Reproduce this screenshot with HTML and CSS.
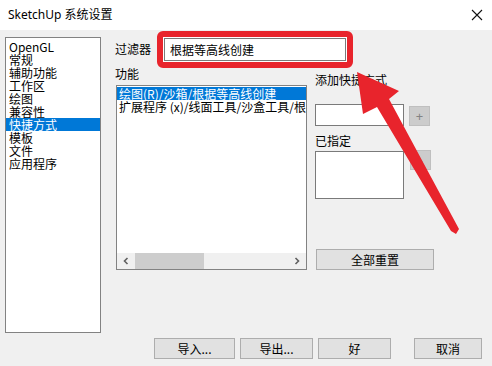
FILE: index.html
```html
<!DOCTYPE html>
<html lang="zh-CN">
<head>
    <meta charset="UTF-8">
    <title>SketchUp 系统设置</title>
    <link rel="stylesheet" href="styles.css">
</head>
<body>
    <div class="dialog">
        <div class="titlebar">
            <span class="title">SketchUp 系统设置</span>
            <svg class="close" width="12" height="12" viewBox="0 0 12 12">
                <path d="M1 1 L11 11 M11 1 L1 11" stroke="#111" stroke-width="1.1" fill="none"/>
            </svg>
        </div>

        <div class="main">
            <ul class="nav">
                <li>OpenGL</li>
                <li>常规</li>
                <li>辅助功能</li>
                <li>工作区</li>
                <li>绘图</li>
                <li>兼容性</li>
                <li class="selected">快捷方式</li>
                <li>模板</li>
                <li>文件</li>
                <li>应用程序</li>
            </ul>

            <div class="panel">
                <div class="filter-row">
                    <span class="label filter-label">过滤器</span>
                    <div class="highlight">
                        <div class="field filter-input">根据等高线创建</div>
                    </div>
                </div>

                <div class="columns">
                    <div class="col-left">
                        <div class="label">功能</div>
                        <div class="func-list">
                            <ul class="rows">
                                <li class="selected">绘图(R)/沙箱/根据等高线创建</li>
                                <li>扩展程序 (x)/线面工具/沙盒工具/根据等高线创建</li>
                            </ul>
                            <div class="hscroll">
                                <span class="arrow">
                                    <svg width="8" height="8" viewBox="0 0 8 8"><path d="M5.5 1 L2.5 4 L5.5 7" stroke="#606060" stroke-width="1.6" fill="none"/></svg>
                                </span>
                                <span class="track"><span class="thumb"></span></span>
                                <span class="arrow">
                                    <svg width="8" height="8" viewBox="0 0 8 8"><path d="M2.5 1 L5.5 4 L2.5 7" stroke="#606060" stroke-width="1.6" fill="none"/></svg>
                                </span>
                            </div>
                        </div>
                    </div>

                    <div class="col-right">
                        <div class="label add-label">添加快捷方式</div>
                        <div class="key-row">
                            <div class="field key-input"></div>
                            <button class="small-btn" disabled>+</button>
                        </div>
                        <div class="label assigned-label">已指定</div>
                        <div class="key-row">
                            <div class="field assigned-box"></div>
                            <button class="small-btn minus" disabled>-</button>
                        </div>
                        <button class="btn reset-btn">全部重置</button>
                    </div>
                </div>
            </div>
        </div>

        <div class="footer">
            <button class="btn import-btn">导入...</button>
            <button class="btn export-btn">导出...</button>
            <button class="btn ok-btn">好</button>
            <button class="btn cancel-btn">取消</button>
        </div>

        <!-- annotation drawn over the dialog -->
        <svg class="arrow-note" width="492" height="366" viewBox="0 0 492 366">
            <polygon points="357,72 399,91 389,99 459,229 456,234 451,231 377,107 363,114" fill="#e8242c"/>
        </svg>
    </div>
</body>
</html>
```

FILE: styles.css
```css
:root {
    --face: #f0f0f0;
    --border: #828282;
    --field-border: #7a7a7a;
    --select: #0078d7;
    --btn-face: #e1e1e1;
    --btn-border: #adadad;
    --note-red: #e8242c;
}
* {
    margin: 0;
    padding: 0;
    box-sizing: border-box;
}
body {
    font-family: "Noto Sans CJK SC", "Noto Sans", sans-serif;
    font-size: 12px;
    color: #000;
    background: var(--face);
}
.dialog {
    position: relative;
    width: 492px;
    height: 366px;
    background: var(--face);
    overflow: hidden;
}
.titlebar {
    height: 30px;
    background: #fff;
    display: flex;
    align-items: center;
    justify-content: space-between;
    padding: 0 9px 0 8px;
}
.title {
    font-family: "Noto Sans", "Noto Sans CJK SC", sans-serif;
    font-size: 12px;
    line-height: 1;
}
.main {
    height: 306px;
    display: flex;
    padding-left: 5px;
}
.nav {
    list-style: none;
    margin-top: 7px;
    width: 96px;
    height: 296px;
    background: #fff;
    border: 1px solid var(--border);
    padding-top: 1px;
}
.nav li,
.rows li {
    height: 13px;
    line-height: 13px;
    padding-left: 3px;
    white-space: nowrap;
}
.nav li:first-child {
    height: 14px;
    line-height: 15px;
}
.nav li.selected,
.rows li.selected {
    background: var(--select);
    color: #fff;
}
.panel {
    margin-left: 14px;
    display: flex;
    flex-direction: column;
}
.label {
    height: 14px;
    line-height: 14px;
    white-space: nowrap;
}
.filter-row {
    margin-top: 1px;
    height: 36px;
    display: flex;
    align-items: center;
}
.filter-label {
    width: 42px;
}
.highlight {
    border: 6px solid var(--note-red);
    border-radius: 6px;
    padding: 1px;
    background: #fff;
}
.field {
    background: #fff;
    border: 1px solid var(--field-border);
}
.filter-input {
    width: 182px;
    height: 23px;
    line-height: 21px;
    padding-left: 5px;
    font-size: 12px;
}
.columns {
    display: flex;
}
.col-left {
    display: flex;
    flex-direction: column;
}
.func-list {
    margin-top: 4px;
    margin-left: 1px;
    width: 191px;
    height: 185px;
    background: #fff;
    border: 1px solid var(--border);
    display: flex;
    flex-direction: column;
}
.rows {
    list-style: none;
    flex: 1;
    padding-top: 1px;
    overflow: hidden;
}
.rows li {
    padding-left: 2px;
}
.hscroll {
    height: 16px;
    display: flex;
    background: var(--face);
}
.hscroll .arrow {
    width: 18px;
    display: flex;
    align-items: center;
    justify-content: center;
}
.hscroll .track {
    flex: 1;
    display: flex;
}
.hscroll .thumb {
    width: 69px;
    background: #cdcdcd;
}
.col-right {
    margin-left: 8px;
    display: flex;
    flex-direction: column;
}
.add-label {
    margin-top: 6px;
}
.key-row {
    display: flex;
    align-items: flex-start;
}
.key-input {
    margin-top: 17px;
    width: 89px;
    height: 22px;
}
.small-btn {
    margin-top: 19px;
    margin-left: 5px;
    width: 21px;
    height: 20px;
    background: #cccccc;
    border: 1px solid #bfbfbf;
    color: #838383;
    font-family: "Noto Sans", sans-serif;
    font-size: 13px;
    line-height: 16px;
}
.assigned-label {
    margin-top: 8px;
}
.assigned-box {
    margin-top: 3px;
    width: 89px;
    height: 48px;
}
.small-btn.minus {
    margin-top: 2px;
    margin-left: 6px;
}
.btn {
    height: 21px;
    background: var(--btn-face);
    border: 1px solid var(--btn-border);
    font-family: "Noto Sans CJK SC", sans-serif;
    font-size: 12px;
    line-height: 18px;
    color: #000;
}
.reset-btn {
    margin-top: 50px;
    margin-left: 1px;
    width: 118px;
}
.footer {
    display: flex;
    justify-content: flex-end;
    padding: 2px 10px 0 0;
}
.import-btn { width: 81px; }
.export-btn { width: 73px; margin-left: 5px; }
.ok-btn { width: 73px; margin-left: 5px; }
.cancel-btn { width: 68px; margin-left: 23px; }
.arrow-note {
    position: absolute;
    left: 0;
    top: 0;
    pointer-events: none;
}
```
